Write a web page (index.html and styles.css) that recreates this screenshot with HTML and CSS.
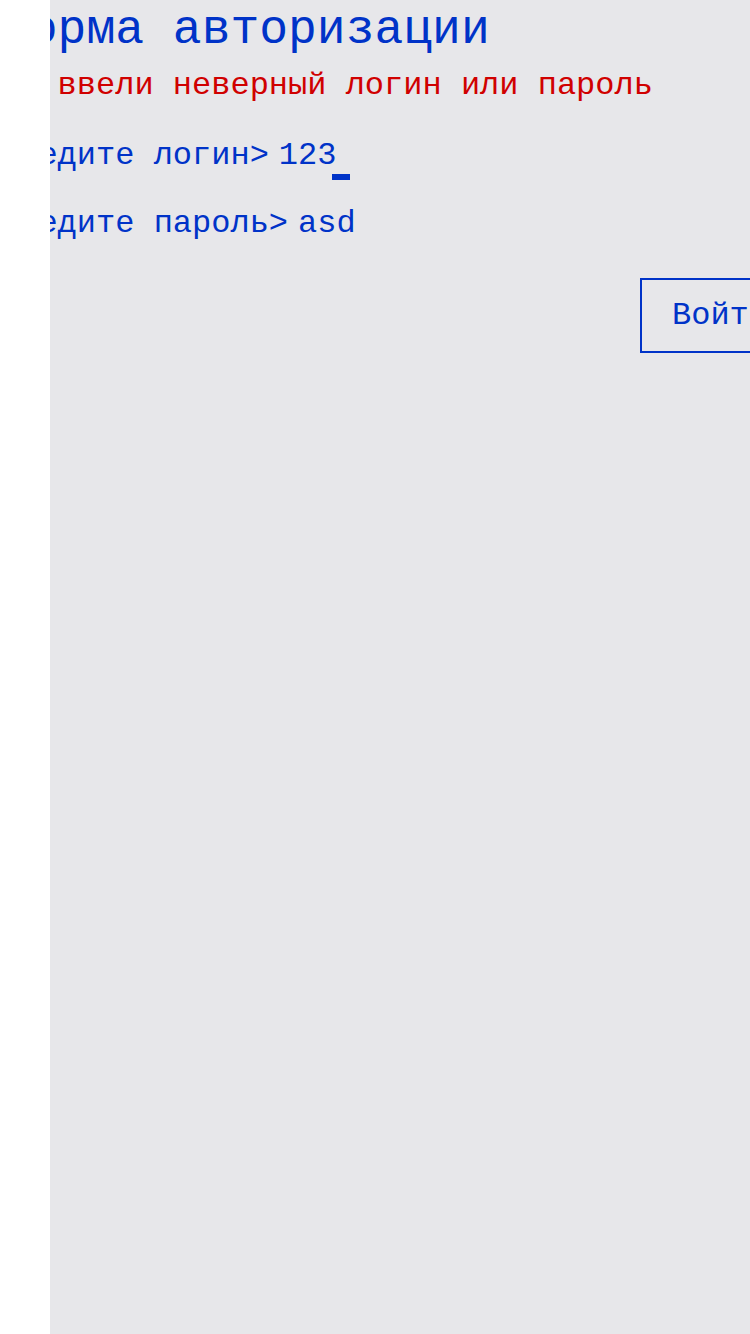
FILE: index.html
```html
<!DOCTYPE html>
<html lang="ru">
<head>
<meta charset="utf-8">
<title>Форма авторизации</title>
<link rel="stylesheet" href="styles.css">
</head>
<body>
<main class="page">
  <form class="auth">
    <h1 class="title">Форма авторизации</h1>
    <p class="error">Вы ввели неверный логин или пароль</p>
    <div class="field"><span class="prompt">Введите логин&gt;</span><span class="value">123</span><span class="cursor"></span></div>
    <div class="field field-pass"><span class="prompt">Введите пароль&gt;</span><span class="value">asd</span></div>
    <div class="actions"><button type="button" class="btn">Войти</button></div>
  </form>
</main>
<div class="sidebar"></div>
</body>
</html>
```
FILE: styles.css
```css
html, body {
  margin: 0;
  padding: 0;
}
body {
  background: #e7e7ea;
  overflow: hidden;
  font-family: "Liberation Mono", "DejaVu Sans Mono", monospace;
  color: #0033c8;
}
.auth {
  width: 800px;
  display: flex;
  flex-direction: column;
}
.title {
  margin: 0;
  font-size: 48px;
  font-weight: normal;
  line-height: 60px;
}
.error {
  margin: 6px 0 0;
  font-size: 32px;
  line-height: 40px;
  color: #d00000;
}
.field {
  font-size: 32px;
  line-height: 40px;
  margin-top: 30px;
  white-space: pre;
}
.field-pass {
  margin-top: 24px;
}
.value {
  margin-left: 10px;
}
.cursor {
  display: inline-block;
  width: 18px;
  height: 6px;
  margin-left: -4px;
  background: #0033c8;
  vertical-align: -16px;
}
.actions {
  display: flex;
  justify-content: flex-end;
  margin-top: 34px;
}
.btn {
  font-family: inherit;
  font-size: 32px;
  color: #0033c8;
  background: transparent;
  border: 2px solid #0033c8;
  border-radius: 0;
  padding: 0 30px;
  height: 75px;
  box-sizing: border-box;
}
.sidebar {
  position: fixed;
  left: 0;
  top: 0;
  bottom: 0;
  width: 50px;
  background: #ffffff;
}
```
